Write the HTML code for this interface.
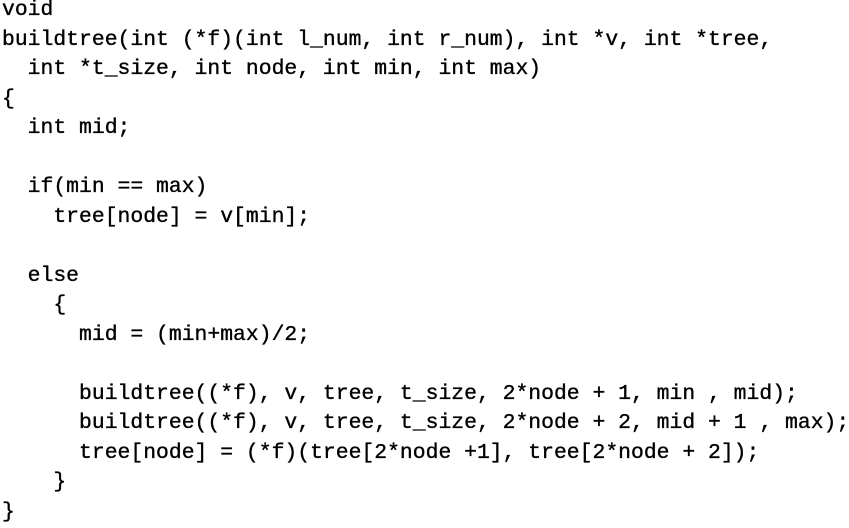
<!DOCTYPE html>
<html><head><meta charset="utf-8"><style>
html,body{margin:0;padding:0;background:#fff;width:849px;height:528px;overflow:hidden}
pre{margin:0;position:absolute;left:2px;top:-4px;font-family:"Liberation Mono",monospace;font-size:21.4px;line-height:29.5px;color:#000;-webkit-text-stroke:0.35px #000}
</style></head><body><pre>void
buildtree(int (*f)(int l_num, int r_num), int *v, int *tree,
  int *t_size, int node, int min, int max)
{
  int mid;

  if(min == max)
    tree[node] = v[min];

  else
    {
      mid = (min+max)/2;

      buildtree((*f), v, tree, t_size, 2*node + 1, min , mid);
      buildtree((*f), v, tree, t_size, 2*node + 2, mid + 1 , max);
      tree[node] = (*f)(tree[2*node +1], tree[2*node + 2]);
    }
}</pre></body></html>
